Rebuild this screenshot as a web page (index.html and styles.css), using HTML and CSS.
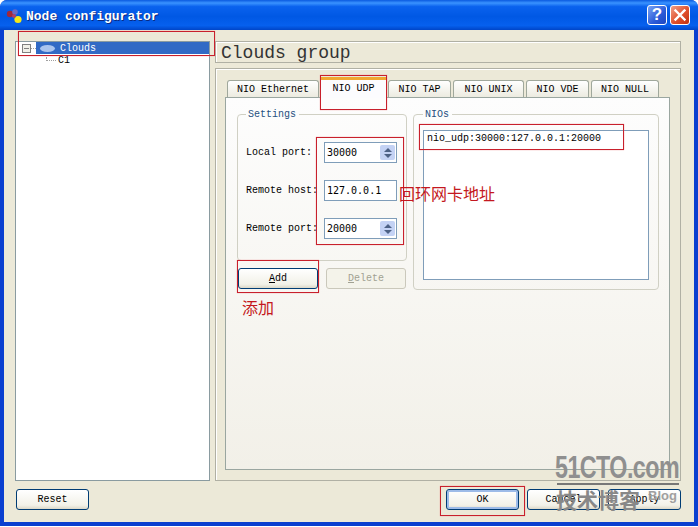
FILE: index.html
```html
<!DOCTYPE html>
<html lang="zh">
<head>
  <meta charset="UTF-8">
  <title>Node configurator</title>
  <link rel="stylesheet" href="styles.css">
</head>
<body>
  <div class="window">
    <!-- Title bar -->
    <div class="titlebar">
      <svg class="app-icon" width="16" height="16" viewBox="0 0 16 16">
        <circle cx="4" cy="6" r="3.2" fill="#a0283c"/>
        <circle cx="9" cy="4" r="2.8" fill="#6a6ac4"/>
        <circle cx="12" cy="11.5" r="3.6" fill="#f4e818"/>
        <circle cx="8" cy="8" r="2" fill="#b04060"/>
      </svg>
      <span class="title-text">Node configurator</span>
      <div class="caption-btn help">?</div>
      <div class="caption-btn close">
        <svg width="14" height="14" viewBox="0 0 14 14"><path d="M2.5 2.5 L11.5 11.5 M11.5 2.5 L2.5 11.5" stroke="#fff" stroke-width="2.4" stroke-linecap="square"/></svg>
      </div>
    </div>

    <div class="client">
      <div class="main">
        <!-- Tree -->
        <div class="tree">
          <div class="tree-row">
            <span class="expander"></span>
            <span class="tree-dots"></span>
            <div class="tree-selected">
              <span class="cloud"></span>
              <span class="tree-label">Clouds</span>
            </div>
          </div>
          <div class="tree-child">
            <span class="child-dots"></span>
            <span>C1</span>
          </div>
        </div>

        <div class="right">
          <div class="heading">Clouds group</div>
          <div class="tab-frame">
            <div class="tabs">
              <div class="tab tab-eth">NIO Ethernet</div>
              <div class="tab tab-udp active">NIO UDP</div>
              <div class="tab tab-tap">NIO TAP</div>
              <div class="tab tab-unix">NIO UNIX</div>
              <div class="tab tab-vde">NIO VDE</div>
              <div class="tab tab-null">NIO NULL</div>
            </div>
            <div class="pane">
              <div class="col-left">
                <fieldset class="group settings">
                  <legend>Settings</legend>
                  <div class="form-row">
                    <label>Local port:</label>
                    <div class="field"><span>30000</span><span class="spin"><i class="up"></i><i class="down"></i></span></div>
                  </div>
                  <div class="form-row">
                    <label>Remote host:</label>
                    <div class="field"><span>127.0.0.1</span></div>
                  </div>
                  <div class="form-row">
                    <label>Remote port:</label>
                    <div class="field"><span>20000</span><span class="spin"><i class="up"></i><i class="down"></i></span></div>
                  </div>
                </fieldset>
                <div class="group-buttons">
                  <div class="button add"><u>A</u>dd</div>
                  <div class="button disabled"><u>D</u>elete</div>
                </div>
              </div>
              <fieldset class="group nios">
                <legend>NIOs</legend>
                <div class="nio-list">nio_udp:30000:127.0.0.1:20000</div>
              </fieldset>
            </div>
          </div>
        </div>
      </div>

      <div class="footer">
        <div class="button dialog">Reset</div>
        <div class="footer-right">
          <div class="button dialog default">OK</div>
          <div class="button dialog">Cancel</div>
          <div class="button dialog apply">Apply</div>
        </div>
      </div>
    </div>
  </div>

  <!-- Red annotations drawn over the screenshot -->
  <div class="mark mark-tree"></div>
  <div class="mark mark-tab"></div>
  <div class="mark mark-inputs"></div>
  <div class="mark mark-add"></div>
  <div class="mark mark-nio"></div>
  <div class="mark mark-ok"></div>
  <div class="note note-addr">回环网卡地址</div>
  <div class="note note-add">添加</div>

  <!-- Watermark -->
  <div class="wm wm-site">51CTO.com</div>
  <div class="wm wm-line"></div>
  <div class="wm wm-blog">技术博客</div>
  <div class="wm wm-en">Blog</div>
</body>
</html>
```

FILE: styles.css
```css
html, body {
  margin: 0;
  padding: 0;
  background-color: #fff;
}
body {
  position: relative;
  width: 698px;
  height: 527px;
  overflow: hidden;
  font-family: "Liberation Mono", monospace;
  font-size: 10px;
  color: #000;
}
.window {
  width: 698px;
  height: 526px;
  display: flex;
  flex-direction: column;
  background-color: #0a3fd0;
  border-radius: 7px 7px 0 0;
  overflow: hidden;
}
.titlebar {
  height: 30px;
  flex: none;
  display: flex;
  align-items: center;
  padding: 0 8px 0 6px;
  box-sizing: border-box;
  background: linear-gradient(to bottom, #0a5ae0 0%, #3a93ff 10%, #0a62ee 22%, #0058e4 55%, #0660ee 85%, #0045c8 100%);
}
.app-icon {
  margin-right: 4px;
  margin-top: 2px;
}
.title-text {
  flex: 1;
  padding-top: 2px;
  font-size: 13px;
  font-weight: bold;
  color: #fff;
  text-shadow: 1px 1px 0 #0a2a80;
}
.caption-btn {
  width: 20px;
  height: 20px;
  box-sizing: border-box;
  display: flex;
  align-items: center;
  justify-content: center;
  border: 1px solid #fff;
  border-radius: 3px;
  color: #fff;
}
.help {
  margin-right: 3px;
  background: linear-gradient(135deg, #7aa4f4, #2a5ad8 60%, #1c46c0);
  font-family: "Liberation Sans", sans-serif;
  font-size: 17px;
  font-weight: bold;
}
.close {
  background: linear-gradient(135deg, #f0a088, #e0502c 55%, #c03010);
}
.client {
  flex: 1;
  margin: 0 4px 4px 4px;
  padding: 11px 12px 0 11px;
  background-color: #ece9d8;
  display: flex;
  flex-direction: column;
}
.main {
  display: flex;
  gap: 5px;
  height: 440px;
}
.tree {
  width: 195px;
  box-sizing: border-box;
  background-color: #fff;
  border: 1px solid #8a9ba0;
  padding: 0 0 0 6px;
}
.tree-row {
  display: flex;
  align-items: center;
  height: 12px;
}
.expander {
  width: 9px;
  height: 9px;
  box-sizing: border-box;
  border: 1px solid #808080;
  background: linear-gradient(to bottom, #808080 0, #808080 100%) center / 5px 1px no-repeat, #f0f0e8;
}
.tree-dots {
  width: 5px;
  border-top: 1px dotted #a0a0a0;
}
.tree-selected {
  flex: 1;
  height: 12px;
  display: flex;
  align-items: center;
  background-color: #316ac5;
  padding-left: 4px;
}
.cloud {
  width: 15px;
  height: 7px;
  border-radius: 50%;
  background-color: #a9c4ee;
}
.tree-label {
  margin-left: 5px;
  color: #fff;
}
.tree-child {
  display: flex;
  align-items: center;
  height: 12px;
  padding-left: 24px;
}
.child-dots {
  width: 10px;
  height: 4px;
  margin: 0 2px 3px 0;
  border-left: 1px dotted #a0a0a0;
  border-bottom: 1px dotted #a0a0a0;
  box-sizing: border-box;
}
.right {
  width: 466px;
  display: flex;
  flex-direction: column;
  gap: 5px;
}
.heading {
  height: 22px;
  box-sizing: border-box;
  border: 1px solid #b0b0a4;
  box-shadow: inset 1px 1px 0 #fff;
  padding-left: 5px;
  font-size: 18px;
  line-height: 22px;
  color: #333;
}
.tab-frame {
  flex: 1;
  box-sizing: border-box;
  border: 1px solid #b0b0a4;
  box-shadow: inset 1px 1px 0 #fff;
  padding: 8px 0 0 9px;
}
.tabs {
  display: flex;
  align-items: flex-end;
  height: 20px;
  padding-left: 2px;
}
.tab {
  height: 17px;
  box-sizing: border-box;
  margin-right: 1px;
  text-align: center;
  line-height: 17px;
  border: 1px solid #a0a89c;
  border-bottom: none;
  border-radius: 3px 3px 0 0;
  background: linear-gradient(to bottom, #fff, #ecebe0);
}
.tab-eth { width: 92px; }
.tab-udp { width: 67px; }
.tab-tap { width: 63px; margin-right: 2px; }
.tab-unix { width: 71px; margin-right: 2px; }
.tab-vde { width: 63px; margin-right: 2px; }
.tab-null { width: 68px; }
.tab.active {
  height: 21px;
  margin-bottom: -1px;
  position: relative;
  line-height: 17px;
  background: #fcfcfe;
  border-top: 3px solid #f0a830;
  border-radius: 0;
}
.pane {
  width: 445px;
  height: 373px;
  box-sizing: border-box;
  border: 1px solid #9aa6a0;
  background: linear-gradient(to bottom, #fdfdfd, #f2f0e8);
  padding: 10px 0 0 11px;
  display: flex;
  align-items: flex-start;
  gap: 6px;
}
.col-left {
  width: 170px;
}
.group {
  margin: 0;
  box-sizing: border-box;
  border: 1px solid #d0d0c4;
  border-radius: 4px;
}
.group legend {
  padding: 1px 3px 0 2px;
  line-height: 12px;
  color: #1f5080;
}
.settings {
  width: 170px;
  height: 153px;
  padding: 21px 0 0 8px;
}
.form-row {
  display: flex;
  align-items: center;
  height: 21px;
  margin-bottom: 17px;
}
.form-row label {
  width: 78px;
  flex: none;
  white-space: nowrap;
}
.field {
  width: 73px;
  height: 21px;
  box-sizing: border-box;
  display: flex;
  align-items: center;
  justify-content: space-between;
  padding: 0 1px 0 2px;
  border: 1px solid #7f9db9;
  background-color: #fff;
  font-family: "DejaVu Sans Mono", monospace;
  font-size: 10px;
}
.spin {
  width: 15px;
  height: 15px;
  display: flex;
  flex-direction: column;
  align-items: center;
  justify-content: center;
  gap: 2px;
  background-color: #c4d2f4;
  border-radius: 2px;
}
.spin i {
  width: 0;
  height: 0;
  border-left: 4px solid transparent;
  border-right: 4px solid transparent;
}
.spin .up { border-bottom: 4px solid #4d6185; }
.spin .down { border-top: 4px solid #4d6185; }
.group-buttons {
  display: flex;
  gap: 8px;
  margin: 7px 0 0 1px;
}
.button {
  width: 80px;
  height: 21px;
  box-sizing: border-box;
  text-align: center;
  line-height: 19px;
  border: 1px solid #003c74;
  border-radius: 3px;
  background: linear-gradient(to bottom, #fff, #f2f1e8 80%, #dcd8c8);
}
.button.disabled {
  border-color: #cac8bb;
  background: #f4f3ea;
  color: #a1a192;
}
.nios {
  width: 246px;
  height: 182px;
  padding: 9px;
}
.nio-list {
  height: 150px;
  box-sizing: border-box;
  border: 1px solid #7f9db9;
  background-color: #fff;
  padding: 2px 3px;
  line-height: 12px;
}
.footer {
  display: flex;
  justify-content: space-between;
  margin-top: 8px;
  padding-left: 1px;
}
.footer-right {
  display: flex;
  gap: 8px;
}
.dialog {
  width: 73px;
}
.default {
  border-color: #003c74;
  box-shadow: inset 0 0 0 2px #9dbbe8;
}
.apply {
  margin-right: 1px;
}
.mark {
  position: absolute;
  box-sizing: border-box;
  border: 1px solid #c8202c;
  box-shadow: 0 0 1px #e88;
}
.mark-tree { left: 18px; top: 31px; width: 197px; height: 25px; }
.mark-tab { left: 320px; top: 75px; width: 67px; height: 35px; }
.mark-inputs { left: 316px; top: 137px; width: 88px; height: 108px; }
.mark-add { left: 237px; top: 260px; width: 82px; height: 33px; }
.mark-nio { left: 419px; top: 124px; width: 205px; height: 26px; }
.mark-ok { left: 440px; top: 486px; width: 85px; height: 30px; }
.note {
  position: absolute;
  font-family: "Noto Sans CJK SC", sans-serif;
  font-size: 16px;
  line-height: 18px;
  color: #c41820;
}
.note-addr { left: 399px; top: 184px; }
.note-add { left: 242px; top: 298px; }
.wm {
  position: absolute;
  color: #8f8f8f;
}
.wm-site {
  left: 555px;
  top: 453px;
  font-family: "Liberation Sans", sans-serif;
  font-size: 31px;
  font-weight: bold;
  line-height: 30px;
  letter-spacing: -0.7px;
  white-space: nowrap;
  transform: scaleX(0.75);
  transform-origin: left top;
}
.wm-line {
  left: 557px;
  top: 483px;
  width: 122px;
  height: 2px;
  background-color: #777;
}
.wm-blog {
  left: 556px;
  top: 487px;
  font-family: "Noto Sans CJK SC", sans-serif;
  font-size: 21px;
  font-weight: bold;
  line-height: 24px;
  color: #888;
}
.wm-en {
  left: 648px;
  top: 488px;
  font-family: "Liberation Sans", sans-serif;
  font-size: 13px;
  font-weight: bold;
  line-height: 16px;
  color: #a0a0a0;
}
```
